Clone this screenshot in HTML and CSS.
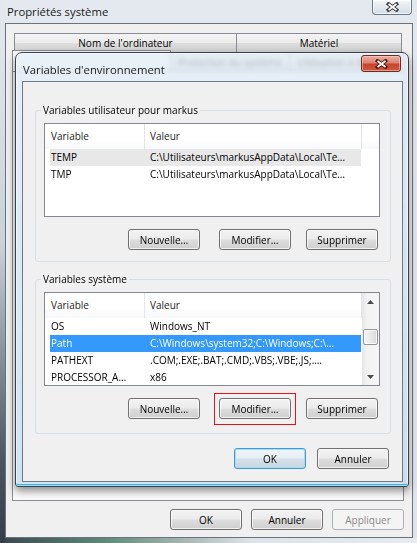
FILE: index.html
```html
<!DOCTYPE html>
<html lang="fr">
<head>
  <meta charset="UTF-8">
  <meta name="viewport" content="width=device-width, initial-scale=1.0">
  <title>Propriétés système</title>
  <link rel="stylesheet" href="styles.css">
</head>
<body>
  <!-- Fenêtre principale -->
  <div class="fenetre">
    <div class="barre-titre">
      <span class="titre">Propriétés système</span>
      <span class="fermer-verre">
        <svg width="13" height="10" viewBox="0 0 13 10">
          <path d="M2.5 2 L10.5 8 M10.5 2 L2.5 8" stroke="#3c3f44" stroke-width="3.6" stroke-linecap="square"/>
          <path d="M2.5 2 L10.5 8 M10.5 2 L2.5 8" stroke="#fff" stroke-width="1.7"/>
        </svg>
      </span>
    </div>

    <div class="zone-client">
      <div class="onglets arriere">
        <div class="onglet o1">Nom de l'ordinateur</div>
        <div class="onglet o2">Matériel</div>
      </div>
      <div class="onglets avant">
        <div class="onglet o3 actif"></div>
        <div class="onglet o4">Protection du système</div>
        <div class="onglet o5">Utilisation à distance</div>
      </div>
      <div class="page-onglet"></div>
      <div class="boutons">
        <button class="bouton">OK</button>
        <button class="bouton">Annuler</button>
        <button class="bouton" disabled>Appliquer</button>
      </div>
    </div>

    <!-- Boîte de dialogue -->
    <div class="dialogue">
      <div class="dialogue-titre">
        <span class="titre">Variables d'environnement</span>
        <span class="fermer-rouge">
          <svg width="13" height="10" viewBox="0 0 13 10">
            <path d="M2.5 2 L10.5 8 M10.5 2 L2.5 8" stroke="#4a1a12" stroke-width="3.6" stroke-linecap="square"/>
            <path d="M2.5 2 L10.5 8 M10.5 2 L2.5 8" stroke="#fff" stroke-width="1.7"/>
          </svg>
        </span>
      </div>

      <div class="dialogue-client">
        <fieldset class="groupe">
          <legend>Variables utilisateur pour markus</legend>
          <div class="liste">
            <div class="liste-corps">
              <div class="entete">
                <div class="c1">Variable</div>
                <div class="c2">Valeur</div>
                <div class="reste"></div>
              </div>
              <div class="ligne inactive"><span class="c1">TEMP</span><span class="c2">C:\Utilisateurs\markusAppData\Local\Te…</span></div>
              <div class="ligne"><span class="c1">TMP</span><span class="c2">C:\Utilisateurs\markusAppData\Local\Te…</span></div>
            </div>
          </div>
          <div class="rangee">
            <button class="bouton">Nouvelle…</button>
            <button class="bouton">Modifier…</button>
            <button class="bouton">Supprimer</button>
          </div>
        </fieldset>

        <fieldset class="groupe systeme">
          <legend>Variables système</legend>
          <div class="liste">
            <div class="liste-corps">
              <div class="entete">
                <div class="c1">Variable</div>
                <div class="c2">Valeur</div>
              </div>
              <div class="ligne"><span class="c1">OS</span><span class="c2">Windows_NT</span></div>
              <div class="ligne choisie"><span class="c1">Path</span><span class="c2">C:\Windows\system32;C:\Windows;C:\…</span></div>
              <div class="ligne"><span class="c1">PATHEXT</span><span class="c2">.COM;.EXE;.BAT;.CMD;.VBS;.VBE;.JS;.…</span></div>
              <div class="ligne"><span class="c1">PROCESSOR_A…</span><span class="c2">x86</span></div>
            </div>
            <div class="defilement">
              <div class="fleche"><svg width="7" height="4" viewBox="0 0 7 4"><polygon points="0,4 3.5,0 7,4" fill="#4a4a4a"/></svg></div>
              <div class="piste"><div class="curseur"></div></div>
              <div class="fleche"><svg width="7" height="4" viewBox="0 0 7 4"><polygon points="0,0 3.5,4 7,0" fill="#4a4a4a"/></svg></div>
            </div>
          </div>
          <div class="rangee">
            <button class="bouton">Nouvelle…</button>
            <button class="bouton signale">Modifier…</button>
            <button class="bouton">Supprimer</button>
          </div>
        </fieldset>

        <div class="rangee-fin">
          <button class="bouton defaut">OK</button>
          <button class="bouton">Annuler</button>
        </div>
      </div>
    </div>
  </div>
</body>
</html>
```

FILE: styles.css
```css
* {
  box-sizing: border-box;
}

body {
  margin: 0;
  width: 417px;
  height: 543px;
  overflow: hidden;
  font-family: "Open Sans", "Noto Sans", sans-serif;
  font-size: 10px;
  color: #000;
  background:
    linear-gradient(to bottom, #e3e9ef 0%, #c9d1d9 45%, #4a555f 85%, #343e48 100%) left top / 5px 100% no-repeat,
    linear-gradient(to right, #3b4650 0%, #5d8a77 25%, #aab8b4 45%, #dde3e8 60%, #e7ebef 100%) left bottom / 100% 5px no-repeat,
    linear-gradient(to bottom, #e4e9ef, #dfe5eb);
}

.fenetre {
  position: relative;
  height: 543px;
}

/* Barre de titre principale */
.barre-titre {
  display: flex;
  align-items: flex-start;
  height: 23px;
  padding-left: 7px;
}

.titre {
  font-size: 11.3px;
  line-height: 15px;
  color: #1a1a1a;
}

.barre-titre .titre {
  margin-top: 4px;
}

.fermer-verre {
  display: flex;
  align-items: center;
  justify-content: center;
  margin-left: auto;
  margin-right: 5px;
  width: 40px;
  height: 15px;
  border: 1px solid #6c7886;
  border-top: 0;
  border-radius: 0 0 4px 4px;
  background: linear-gradient(#f4f7fa, #e2e8ee 50%, #d4dde6);
  box-shadow: inset 0 0 0 1px rgba(255, 255, 255, 0.7);
}

.zone-client {
  width: 408px;
  height: 515px;
  margin-left: 5px;
  padding: 9px 8px 0 6px;
  border: 1px solid #69737d;
  background: #f0f0f0;
}

/* Onglets */
.onglets {
  display: flex;
  height: 19px;
}

.onglets.arriere {
  margin-left: 2px;
}

.onglet {
  display: flex;
  align-items: center;
  justify-content: center;
  margin-right: -1px;
  border: 1px solid #898c95;
  border-bottom: 0;
  background: linear-gradient(#f3f3f3, #ebebeb 50%, #dedede 50%, #d0d0d0);
  white-space: nowrap;
  overflow: hidden;
}

.o1 { width: 223px; }
.o2 { width: 166px; }
.o3 { width: 159px; }
.o4 { width: 120px; }
.o5 { width: 115px; }

.onglet.actif {
  height: 21px;
  margin-top: -2px;
  background: #fcfcfc;
}

.page-onglet {
  height: 430px;
  border: 1px solid #898c95;
  background: #fbfbfb;
}

.boutons {
  display: flex;
  justify-content: flex-end;
  gap: 9px;
  margin-top: 8px;
}

/* Boutons */
.bouton {
  width: 72px;
  height: 21px;
  padding: 0;
  font: inherit;
  color: #000;
  border: 1px solid #707070;
  border-radius: 3px;
  background: linear-gradient(#f2f2f2, #ebebeb 48%, #dddddd 52%, #cfcfcf);
  box-shadow: inset 0 0 0 1px rgba(255, 255, 255, 0.7);
}

.bouton:disabled {
  border-color: #adb2b5;
  background: #f4f4f4;
  color: #8a8a8a;
  box-shadow: none;
}

.bouton.defaut {
  border-color: #3c9ad6;
  background: linear-gradient(#f0f5f9, #e6eef4 48%, #d5e1ea 52%, #c8d6e1);
  box-shadow: inset 0 0 0 1px #a6dcf6;
}

/* cadre rouge d'annotation autour du bouton */
.bouton.signale {
  position: relative;
}

.bouton.signale::after {
  content: "";
  position: absolute;
  top: -6px;
  left: -6px;
  right: -6px;
  bottom: -7px;
  border: 1px solid #e8111e;
}

/* Boîte de dialogue */
.dialogue {
  position: absolute;
  left: 15px;
  top: 52px;
  width: 394px;
  height: 435px;
  border: 1px solid #38434f;
  border-radius: 7px 7px 3px 3px;
  background: linear-gradient(rgba(226, 236, 246, 0.78), rgba(196, 221, 242, 0.82));
  backdrop-filter: blur(2px);
  box-shadow: 0 4px 8px rgba(0, 0, 0, 0.45), inset 0 0 0 1px rgba(255, 255, 255, 0.55), inset 0 -2px 0 #3bb4e4;
}

.dialogue-titre {
  display: flex;
  align-items: flex-start;
  height: 28px;
  padding-left: 7px;
}

.dialogue-titre .titre {
  margin-top: 9px;
}

.fermer-rouge {
  display: flex;
  align-items: center;
  justify-content: center;
  margin-left: auto;
  margin-right: 7px;
  margin-top: 2px;
  width: 40px;
  height: 17px;
  border: 1px solid #6b2c21;
  border-radius: 3px;
  background: linear-gradient(#eab0a3, #dc8270 45%, #c8452c 55%, #d0583c);
  box-shadow: inset 0 0 0 1px rgba(255, 220, 210, 0.5);
}

.dialogue-client {
  height: 401px;
  margin: 0 5px 0 6px;
  padding: 21px 13px 0 12px;
  border: 1px solid #6d7986;
  background: #f0f0f0;
}

.groupe {
  margin: 0;
  min-width: 0;
  width: 356px;
  padding: 6px 8px 11px;
  border: 1px solid #d5dfe5;
  border-radius: 3px;
}

.groupe legend {
  padding: 0 2px;
  margin-left: -3px;
  line-height: 14px;
}

.groupe.systeme {
  margin-top: 10px;
  padding-bottom: 14px;
}

/* Listes */
.liste {
  display: flex;
  width: 336px;
  height: 94px;
  border: 1px solid #828790;
  background: #fff;
  overflow: hidden;
}

.liste-corps {
  flex: 1;
  min-width: 0;
}

.entete {
  display: flex;
  height: 25px;
  background: linear-gradient(#fff, #fff 60%, #f7f8f9);
}

.entete div {
  line-height: 25px;
  border-right: 1px solid #e3e5e8;
  color: #1e1e1e;
}

.entete .c1 {
  width: 100px;
  padding-left: 6px;
}

.entete .c2 {
  width: 217px;
  padding-left: 5px;
}

.entete .reste {
  flex: 1;
  border-right: 0;
}

.ligne {
  display: flex;
  width: 311px;
  height: 17px;
  margin-left: 5px;
  line-height: 17px;
  white-space: nowrap;
}

.ligne span {
  overflow: hidden;
  text-overflow: ellipsis;
}

.ligne .c1 {
  width: 95px;
  padding-left: 1px;
}

.ligne .c2 {
  width: 216px;
  padding: 0 5px;
}

.ligne.inactive {
  background: #e8e8e8;
}

.ligne.choisie {
  background: #3399ff;
  color: #fff;
}

/* Barre de défilement */
.defilement {
  display: flex;
  flex-direction: column;
  width: 17px;
  background: linear-gradient(to right, #e6e6e6, #f3f3f3 30%, #f6f6f6);
}

.fleche {
  display: flex;
  align-items: center;
  justify-content: center;
  height: 17px;
}

.piste {
  flex: 1;
  padding-top: 19px;
}

.curseur {
  width: 15px;
  height: 16px;
  margin-left: 1px;
  border: 1px solid #959595;
  border-radius: 2px;
  background: linear-gradient(to right, #f6f6f6, #e9e9e9 50%, #d8d8d8);
  box-shadow: inset 0 0 0 1px rgba(255, 255, 255, 0.7);
}

.rangee {
  display: flex;
  margin-top: 12px;
  padding-left: 84px;
}

.rangee .bouton:nth-child(2) {
  margin-left: 19px;
}

.rangee .bouton:nth-child(3) {
  margin-left: 15px;
}

.rangee-fin {
  display: flex;
  justify-content: flex-end;
  gap: 11px;
  margin-top: 14px;
}
```
